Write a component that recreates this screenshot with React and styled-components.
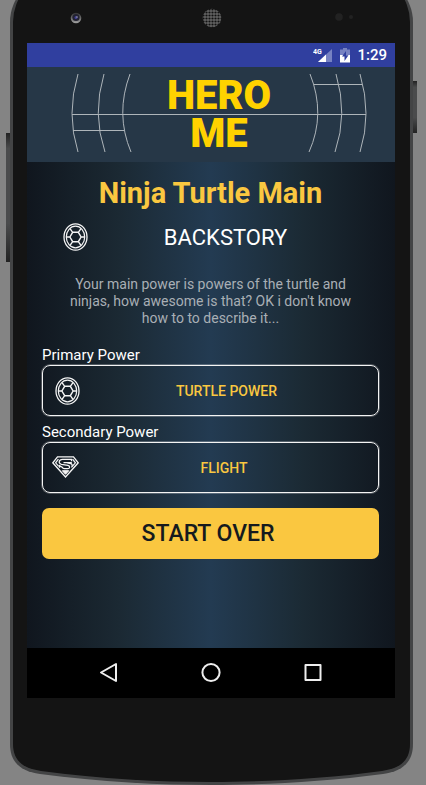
import React from "react";
import styled, { createGlobalStyle } from "styled-components";

const GlobalStyle = createGlobalStyle`
  * { box-sizing: border-box; }
  body {
    margin: 0;
    background: #848484;
    font-family: Roboto, "Noto Sans", sans-serif;
    overflow-x: hidden;
  }
  button { font-family: inherit; cursor: pointer; }
`;

const Stage = styled.main`
  display: flow-root;
  padding: 0 13px 0 10px;
  overflow: hidden;
`;

const Phone = styled.div`
  position: relative;
  margin-top: -24px;
  padding: 24px 15px 46px 14px;
  border: solid #434445;
  border-width: 0 3px;
  border-radius: 46px 46px 0 0;
  background: #141414;
`;

const Chin = styled.svg`
  display: block;
  width: 100%;
  height: 41px;
`;

const SideKey = styled.span`
  position: absolute;
  width: 4px;
  height: ${(p) => p.$height}px;
  top: ${(p) => p.$top}px;
  ${(p) => p.$side}: -7px;
  background: linear-gradient(#222, #4a4b4c 12%, #4a4b4c 70%, #222);
`;

const Earpiece = styled.div`
  display: grid;
  grid-template-columns: 1fr auto 1fr;
  align-items: center;
  height: 43px;
  padding: 0 42px 8px 43px;
`;

const Sensors = styled.svg`
  justify-self: end;
`;

const Screen = styled.div`
  display: flex;
  flex-direction: column;
`;

const StatusBar = styled.div`
  display: flex;
  align-items: center;
  justify-content: flex-end;
  height: 24px;
  padding-right: 8px;
  background: #303f9f;
  color: #fff;
`;

const Clock = styled.time`
  margin-left: 6px;
  font-size: 15px;
  font-weight: 500;
  line-height: 24px;
`;

const Banner = styled.header`
  position: relative;
  height: 95px;
  padding-top: 10px;
  background: #263747;
  text-align: center;
`;

const BannerLines = styled.svg`
  position: absolute;
  inset: 0;
  width: 100%;
  height: 100%;
`;

const Logo = styled.h1`
  position: relative;
  margin: 0 0 0 16px;
  color: #ffd200;
  font-size: 40px;
  font-weight: 900;
  line-height: 38px;
`;

const LogoLine = styled.span`
  display: block;
`;

const Content = styled.section`
  display: flex;
  flex-direction: column;
  padding: 13px 16px 89px 15px;
  background: linear-gradient(90deg, #10161e, #1b2933 25%, #233b52 50%, #1b2a34 75%, #10161e);
`;

const Title = styled.h2`
  margin: 0;
  color: #fac740;
  font-size: 29px;
  font-weight: 700;
  line-height: 36px;
  text-align: center;
`;

const Backstory = styled.h3`
  display: flex;
  align-items: center;
  height: 52px;
  margin: 0;
  padding: 0 16px 0 21px;
  color: #fff;
  font-size: 22px;
  font-weight: 400;
`;

const Grow = styled.span`
  flex: 1;
  text-align: center;
`;

const Description = styled.p`
  margin: 13px 20px 19px;
  color: #a9afb5;
  font-size: 14px;
  line-height: 17px;
  text-align: center;
`;

const Label = styled.span`
  color: #fff;
  font-size: 15px;
  line-height: 19px;
`;

const PowerButton = styled.button`
  display: flex;
  align-items: center;
  height: 51px;
  margin: 0 0 7px;
  padding: 0 ${(p) => (p.$wide ? 9 : 5)}px 0 ${(p) => (p.$wide ? 9 : 12)}px;
  border: 1px solid #f4f4f4;
  border-radius: 8px;
  background: transparent;
  box-shadow: 0 0 0 1px rgba(255, 255, 255, 0.25);
  color: #fac740;
  font-size: 14px;
  font-weight: 500;
`;

const StartOver = styled.button`
  height: 51px;
  margin-top: 8px;
  padding: 0 5px 0 0;
  border: 0;
  border-radius: 7px;
  background: #fac740;
  color: #151a1e;
  font-size: 23px;
  font-weight: 500;
`;

const NavBar = styled.nav`
  display: flex;
  align-items: center;
  justify-content: center;
  gap: 78px;
  height: 50px;
  background: #000;
`;

const NavButton = styled.button`
  display: flex;
  padding: 0;
  border: 0;
  background: none;
`;

function Turtle() {
  return (
    <svg width="25" height="28" viewBox="0 0 25 28" fill="none" stroke="#f5f5f5" aria-hidden="true">
      <ellipse cx="12.5" cy="14" rx="11.5" ry="13.2" strokeWidth="1.3" />
      <ellipse cx="12.5" cy="14" rx="9.2" ry="10.9" strokeWidth="1.2" />
      <path
        d="M9.7 9.3h5.6l2.8 4.7-2.8 4.7H9.7L6.9 14zM9.7 9.3 7.2 5.8M15.3 9.3l2.5-3.5M18.1 14h3.6M15.3 18.7l2.5 3.5M9.7 18.7l-2.5 3.5M6.9 14H3.3"
        strokeWidth="1.4"
      />
    </svg>
  );
}

function HeroShield() {
  return (
    <svg width="27" height="24" viewBox="0 0 27 24" fill="none" stroke="#f5f5f5" aria-hidden="true">
      <path d="M5.5.8h16l4.7 6L13.5 21 .8 6.8z" strokeWidth="1.3" />
      <path d="M6.4 3.1 3.6 6.8l3.2 3.6M20.6 3.1l2.8 3.7-4 4.5" strokeWidth="1.2" />
      <path d="M19.5 5.2V3.3h-9c-3.7 0-4.6 4.3-1.1 5l6.5 1.1c2.4.4 2.2 3.3-.2 3.3h-3.4c-1.3 0-1.8-.7-2.2-1.6L7.6 9.6v2.1M19.8 6.7h-8.3M15.3 6.8l3.4.8c1.5.4 1.8 1.9 1.2 2.9" strokeWidth="1.3" />
      <path d="M10.3 14.7h6.5l-3.3 3.6z" fill="#f5f5f5" />
    </svg>
  );
}

export default function App() {
  return (
    <>
      <GlobalStyle />
      <Stage>
        <Phone>
          <SideKey $side="left" $top={157} $height={129} />
          <SideKey $side="right" $top={105} $height={52} />
          <Earpiece>
            <svg width="12" height="12" viewBox="0 0 12 12" aria-hidden="true">
              <defs>
                <linearGradient id="rim" x2="0" y2="1">
                  <stop stopColor="#333" />
                  <stop offset="1" stopColor="#a2a2a2" />
                </linearGradient>
              </defs>
              <circle cx="6" cy="6" r="5.3" fill="url(#rim)" />
              <circle cx="6" cy="5.5" r="3.6" fill="#222231" />
              <circle cx="6" cy="5.5" r="1.5" fill="#403f91" />
              <circle cx="7" cy="5" r=".7" fill="#bbb" />
            </svg>
            <svg width="20" height="20" viewBox="0 0 20 20" aria-hidden="true">
              <defs>
                <pattern id="mesh" width="3" height="3" patternUnits="userSpaceOnUse">
                  <rect width="3" height="3" fill="#636363" />
                  <circle cx="1.5" cy="1.5" r="1.1" fill="#111" />
                </pattern>
              </defs>
              <circle cx="10" cy="10" r="9.3" fill="url(#mesh)" />
            </svg>
            <Sensors width="18" height="10" viewBox="0 0 18 10" aria-hidden="true">
              <circle cx="4" cy="4" r="3.8" fill="#222" />
              <circle cx="16" cy="4" r="2" fill="#222" />
            </Sensors>
          </Earpiece>
          <Screen>
            <StatusBar>
              <svg width="38" height="16" viewBox="0 0 38 16" aria-hidden="true">
                <path d="M19 2v13H5z" fill="#7782c2" />
                <path d="M13 7.600V15H5z" fill="#fff" />
                <text x="0" y="7" fill="#fff" fontSize="7" fontWeight="700">4G</text>
                <path d="M30 1h4v1.500h3V8H27V2.500h3z" fill="#7782c2" />
                <path d="M27 8h10v7.500H27z" fill="#fff" />
                <path d="M33 4l-4 5.500h2.500V14l4-5.800H33z" fill="#303f9f" />
              </svg>
              <Clock>1:29</Clock>
            </StatusBar>
            <Banner>
              <BannerLines viewBox="0 0 368 95" fill="none" stroke="#aeb5ba" aria-hidden="true">
                <path d="M51 7Q39 47 51 85M77 7Q65 47 78 85M103 7Q88 47 104 85M283 7Q299 47 282 85M309 7Q321 47 308 85M333 7Q345 47 333 85" />
                <path d="M45 47.500H339" />
                <path d="M46 63.500H97M287 17.500H335" />
              </BannerLines>
              <Logo>
                <LogoLine>HERO</LogoLine>
                <LogoLine>ME</LogoLine>
              </Logo>
            </Banner>
            <Content>
              <Title>Ninja Turtle Main</Title>
              <Backstory><Turtle /><Grow>BACKSTORY</Grow></Backstory>
              <Description>
                Your main power is powers of the turtle and ninjas, how awesome is that? OK i don't know how to to describe it...
              </Description>
              <Label id="primary">Primary Power</Label>
              <PowerButton aria-describedby="primary"><Turtle /><Grow>TURTLE POWER</Grow></PowerButton>
              <Label id="secondary">Secondary Power</Label>
              <PowerButton $wide aria-describedby="secondary"><HeroShield /><Grow>FLIGHT</Grow></PowerButton>
              <StartOver>START OVER</StartOver>
            </Content>
            <NavBar>
              <NavButton aria-label="Back">
                <svg width="24" height="24" viewBox="0 0 24 24" fill="none" stroke="#eee" strokeWidth="2" strokeLinejoin="round"><path d="M19 3v17L4 11.500z" /></svg>
              </NavButton>
              <NavButton aria-label="Home">
                <svg width="24" height="24" viewBox="0 0 24 24" fill="none" stroke="#eee" strokeWidth="2"><circle cx="12" cy="11.500" r="8.600" /></svg>
              </NavButton>
              <NavButton aria-label="Recent apps">
                <svg width="24" height="24" viewBox="0 0 24 24" fill="none" stroke="#eee" strokeWidth="2" strokeLinejoin="round"><path d="M4.500 4h15v15h-15z" /></svg>
              </NavButton>
            </NavBar>
          </Screen>
        </Phone>
        <Chin viewBox="0 0 403 41" preserveAspectRatio="none" aria-hidden="true">
          <path d="M0 0C0 18 10 27 30 30C90 38 150 41 201 41S313 38 373 30C393 27 403 18 403 0z" fill="#434445" />
          <path d="M3 0C3 16 12 24 31 27C90 35 150 38 201 38S313 35 372 27C391 24 400 16 400 0z" fill="#141414" />
        </Chin>
      </Stage>
    </>
  );
}
